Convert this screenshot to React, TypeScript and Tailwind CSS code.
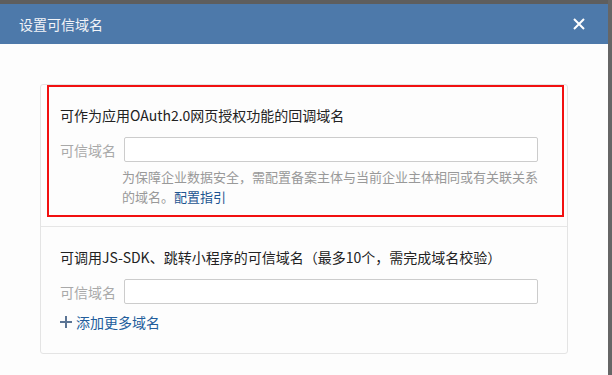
const font = { fontFamily: '"Noto Sans CJK SC", "Noto Sans", sans-serif' };

function DomainInput() {
  return (
    <div className="flex items-center">
      <span className="w-[55px] shrink-0 whitespace-nowrap text-[14px] leading-5 text-[#a9a9a9]">可信域名</span>
      <div className="ml-[9px] h-[25px] w-[414px] shrink-0 rounded-[2px] border border-[#cccccc] bg-white" />
    </div>
  );
}

export default function App() {
  return (
    <div className="flex h-[375px] w-[612px] overflow-hidden bg-[#666666]" style={font}>
      <div className="flex w-[608px] flex-col">
        <div className="h-[4px] shrink-0 bg-[#5e5e5e]" />
        <div className="flex h-[40px] shrink-0 items-center justify-between bg-[#4d79aa] pl-[19px] pr-[23px]">
          <span className="text-[14px] text-[#f2f4f8]">设置可信域名</span>
          <svg width="12" height="12" viewBox="0 0 12 12" className="text-white">
            <path d="M1 1 L11 11 M11 1 L1 11" stroke="currentColor" strokeWidth="2" />
          </svg>
        </div>
        <div className="flex-1 bg-[#fdfdfd] px-[40px] pt-[40px]">
          <div className="rounded-[3px] border border-[#e4e4e4]">
            <div className="pb-[9px] pl-[6px] pr-[3px]">
              <div className="border-2 border-[#f21010] pb-[8px] pl-[11px] pr-[25px] pt-[18px]">
                <div className="whitespace-nowrap text-[14px] leading-5 text-[#222222]">可作为应用OAuth2.0网页授权功能的回调域名</div>
                <div className="mt-[12px]">
                  <DomainInput />
                </div>
                <div className="ml-[62px] mt-[5px] text-[13px] leading-5 text-[#999999]">
                  <div className="whitespace-nowrap">为保障企业数据安全，需配置备案主体与当前企业主体相同或有关联关系</div>
                  <div className="whitespace-nowrap">
                    的域名。<span className="text-[#1d5591]">配置指引</span>
                  </div>
                </div>
              </div>
            </div>
            <div className="border-t border-[#e6e6e6] pb-[21px] pl-[19px] pt-[20px]">
              <div className="whitespace-nowrap text-[14px] leading-5 text-[#222222]">可调用JS-SDK、跳转小程序的可信域名（最多10个，需完成域名校验）</div>
              <div className="mt-[12px]">
                <DomainInput />
              </div>
              <div className="mt-[8px] flex items-center text-[14px] leading-5 text-[#225d9c]">
                <svg width="12" height="12" viewBox="0 0 12 12" className="text-[#5b7494]">
                  <path d="M6 0 V12 M0 6 H12" stroke="currentColor" strokeWidth="2" />
                </svg>
                <span className="ml-[4px]">添加更多域名</span>
              </div>
            </div>
          </div>
        </div>
      </div>
    </div>
  );
}
